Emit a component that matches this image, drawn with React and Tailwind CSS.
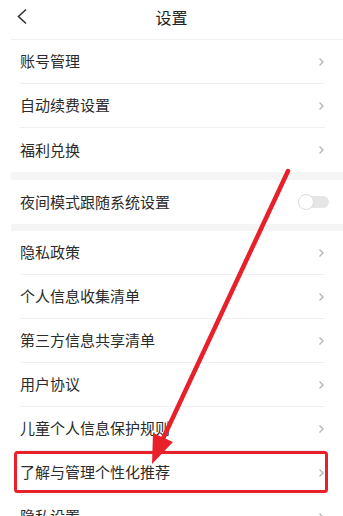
import React from 'react';

const font = { fontFamily: '"Noto Sans CJK SC", "Noto Sans", sans-serif' };

function Chevron() {
  return (
    <svg width="7" height="10" viewBox="0 0 7 10" className="shrink-0">
      <polyline points="1.5,1.5 5,5 1.5,8.5" fill="none" stroke="#b3b3b3" strokeWidth="1.3" />
    </svg>
  );
}

function Row({ label, last, right }) {
  return (
    <div className="h-[44px] flex items-center pl-[9px] pr-[18px]">
      <div className={`flex-1 h-full flex items-center justify-between ${last ? '' : 'border-b border-[#efefef]'}`}>
        <span className="text-[15px] text-[#2b2b2b]">{label}</span>
        {right || <Chevron />}
      </div>
    </div>
  );
}

function Toggle() {
  return (
    <div className="relative w-[31px] h-[14px] mr-[-4px]">
      <div className="absolute inset-y-[1px] left-[4px] right-0 rounded-full bg-[#e6e6e6]" />
      <div className="absolute left-0 top-[-1px] w-[16px] h-[16px] rounded-full bg-white border border-[#dcdcdc]" />
    </div>
  );
}

export default function App() {
  return (
    <div className="relative w-[343px] h-[516px] overflow-hidden bg-white" style={font}>
      <div className="pl-[11px]">
        {/* header */}
        <div className="h-[40px] relative flex items-start justify-center pt-[5px] border-b border-[#f0f0f0]">
          <svg width="14" height="18" viewBox="0 0 14 18" className="absolute left-[5px] top-[8px]">
            <polyline points="10,1.5 2.5,8.5 10,15.5" fill="none" stroke="#333" strokeWidth="1.6" />
          </svg>
          <span className="text-[16px] text-[#222] ml-[-11px]">设置</span>
        </div>

        <Row label="账号管理" />
        <Row label="自动续费设置" />
        <Row label="福利兑换" last />
        <div className="h-[8px] bg-[#f5f5f5]" />
        <Row label="夜间模式跟随系统设置" last right={<Toggle />} />
        <div className="h-[7px] bg-[#f5f5f5]" />
        <Row label="隐私政策" />
        <Row label="个人信息收集清单" />
        <Row label="第三方信息共享清单" />
        <Row label="用户协议" />
        <Row label="儿童个人信息保护规则" />
        <Row label="了解与管理个性化推荐" />
        <Row label="隐私设置" />
      </div>

      {/* annotation overlay */}
      <svg className="absolute inset-0 pointer-events-none" width="343" height="516" viewBox="0 0 343 516">
        <rect x="15.5" y="452.5" width="311" height="39" rx="2" fill="none" stroke="#e8202a" strokeWidth="3" />
        <line x1="288" y1="171" x2="161" y2="443" stroke="#e8202a" strokeWidth="4.5" strokeLinecap="round" />
        <polygon points="152,464 173,442 153,433" fill="#e8202a" />
      </svg>
    </div>
  );
}
